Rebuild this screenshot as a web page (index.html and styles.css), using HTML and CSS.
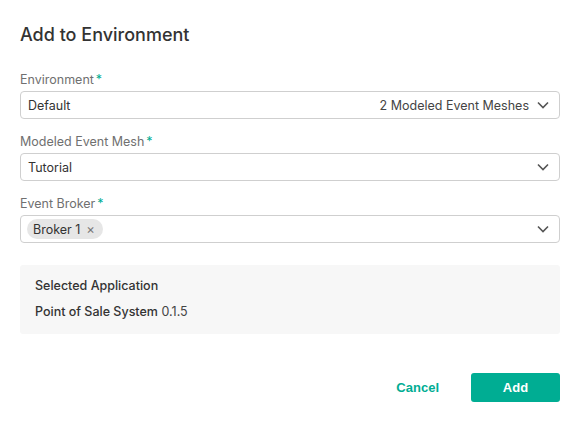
FILE: index.html
```html
<!DOCTYPE html>
<html>
<head>
<meta charset="utf-8">
<link rel="stylesheet" href="styles.css">
</head>
<body>
<div class="dialog">
  <h2 class="title">Add to Environment</h2>

  <div class="field">
    <label class="label">Environment<span class="req">*</span></label>
    <div class="select">
      <span class="value">Default</span>
      <span class="hint">2 Modeled Event Meshes</span>
      <svg class="chev" width="12" height="8" viewBox="0 0 12 8"><path d="M1 1.5 L6 6.5 L11 1.5" fill="none" stroke="#555" stroke-width="1.6"/></svg>
    </div>
  </div>

  <div class="field">
    <label class="label">Modeled Event Mesh<span class="req">*</span></label>
    <div class="select">
      <span class="value">Tutorial</span>
      <svg class="chev" width="12" height="8" viewBox="0 0 12 8"><path d="M1 1.5 L6 6.5 L11 1.5" fill="none" stroke="#555" stroke-width="1.6"/></svg>
    </div>
  </div>

  <div class="field">
    <label class="label">Event Broker<span class="req">*</span></label>
    <div class="select multi">
      <span class="chip">Broker 1 <span class="x">×</span></span>
      <svg class="chev" width="12" height="8" viewBox="0 0 12 8"><path d="M1 1.5 L6 6.5 L11 1.5" fill="none" stroke="#555" stroke-width="1.6"/></svg>
    </div>
  </div>

  <div class="info">
    <div class="info-title">Selected Application</div>
    <div class="info-line"><span class="app">Point of Sale System</span> <span class="ver">0.1.5</span></div>
  </div>

  <div class="actions">
    <button class="btn cancel">Cancel</button>
    <button class="btn add">Add</button>
  </div>
</div>
</body>
</html>
```

FILE: styles.css
```css
html, body {
  margin: 0;
  padding: 0;
  background: #fff;
}
body {
  font-family: Inter, "Noto Sans", sans-serif;
  color: #333;
  font-size: 12.5px;
}
.dialog {
  padding: 23px 20px 0 20px;
}
.title {
  margin: 0 0 24px 0;
  font-size: 18px;
  line-height: 24px;
  font-weight: 500;
  color: #333;
}
.field {
  margin-bottom: 14px;
}
.label {
  display: block;
  line-height: 18px;
  margin-bottom: 2px;
  color: #707070;
}
.req {
  color: #00ad93;
  margin-left: 2px;
}
.select {
  box-sizing: border-box;
  height: 28px;
  border: 1px solid #cfcfcf;
  border-radius: 4px;
  display: flex;
  align-items: center;
  padding: 0 10px 0 7px;
}
.value {
  flex: 1;
  color: #333;
}
.hint {
  color: #444;
  margin-right: 8px;
}
.chev {
  flex: none;
}
.multi {
  padding-left: 6px;
}
.chip {
  display: inline-flex;
  align-items: center;
  height: 20px;
  border-radius: 10px;
  background: #e6e6e6;
  padding: 0 8px 0 6px;
  margin-right: auto;
  color: #333;
}
.x {
  margin-left: 6px;
  color: #777;
  font-size: 13px;
}
.info {
  margin-top: 22px;
  background: #f7f7f7;
  border-radius: 3px;
  padding: 12px 15px 13px 15px;
}
.info-title {
  line-height: 18px;
  font-weight: 500;
  color: #333;
}
.info-line {
  margin-top: 8px;
  line-height: 18px;
}
.app {
  font-weight: 500;
}
.ver {
  color: #444;
}
.actions {
  margin-top: 39px;
  display: flex;
  justify-content: flex-end;
  gap: 18px;
}
.btn {
  font-family: "Liberation Sans", Arial, sans-serif;
  font-weight: bold;
  font-size: 13px;
  height: 29px;
  border: none;
  border-radius: 3px;
  cursor: pointer;
}
.cancel {
  background: transparent;
  color: #00ad93;
  padding: 0 14px;
}
.add {
  background: #00ad93;
  color: #fff;
  width: 89px;
}
```
